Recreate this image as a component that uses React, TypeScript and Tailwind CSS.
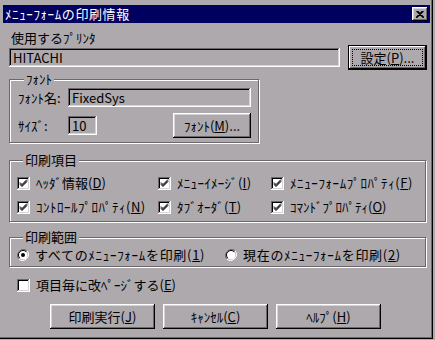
import type { ReactNode } from 'react';

const raised =
  'shadow-[inset_-1px_-1px_0_#000,inset_1px_1px_0_#fff,inset_-2px_-2px_0_#6b676b,inset_2px_2px_0_#d6d3d6]';
const sunken =
  'shadow-[inset_-1px_-1px_0_#fff,inset_1px_1px_0_#6b676b,inset_-2px_-2px_0_#d6d3d6,inset_2px_2px_0_#000]';

const Key = ({ k }: { k: string }) => (
  <>
    (<span className="underline underline-offset-[1px]">{k}</span>)
  </>
);

const Check = ({ on = true }: { on?: boolean }) => (
  <span className={`w-[13px] h-[13px] bg-white shrink-0 flex items-center justify-center ${sunken}`}>
    {on && (
      <svg width="13" height="13" viewBox="0 0 13 13">
        <path d="M3 5.5 L5 7.5 L10 2.5 M3 6.5 L5 8.5 L10 3.5 M3 7.5 L5 9.5 L10 4.5" stroke="#000" strokeWidth="1" fill="none" />
      </svg>
    )}
  </span>
);

const Radio = ({ on }: { on?: boolean }) => (
  <svg width="12" height="12" viewBox="0 0 12 12" className="shrink-0">
    <path d="M10.2 1.8 A6 6 0 0 0 1.8 10.2" stroke="#6b676b" strokeWidth="1" fill="none" />
    <path d="M1.8 10.2 A6 6 0 0 0 10.2 1.8" stroke="#fff" strokeWidth="1" fill="none" />
    <circle cx="6" cy="6" r="4.5" fill="#fff" />
    <path d="M9.2 2.8 A4.5 4.5 0 0 0 2.8 9.2" stroke="#000" strokeWidth="1" fill="none" />
    {on && <circle cx="6" cy="6" r="2" fill="#000" />}
  </svg>
);

const Item = ({ children, on = true, className = '' }: { children: ReactNode; on?: boolean; className?: string }) => (
  <div className="flex items-center h-[16px] gap-[6px] whitespace-nowrap">
    <Check on={on} />
    <span className={className}>{children}</span>
  </div>
);

const Group = ({ title, className, children }: { title: string; className: string; children: ReactNode }) => (
  <fieldset
    className={`border border-[#6b676b] shadow-[1px_1px_0_#fff,inset_1px_1px_0_#fff] min-w-0 ${className}`}
  >
    <legend className="ml-[6px] px-[2px] h-[14px] leading-[14px] bg-[#ada9ad]">{title}</legend>
    {children}
  </fieldset>
);

const Button = ({ children, className = '' }: { children: ReactNode; className?: string }) => (
  <div className={`h-[25px] flex items-center justify-center ${raised} ${className}`}>{children}</div>
);

export default function App() {
  return (
    <div className="w-[435px] h-[340px] bg-[#ada9ad] text-[13px] leading-[14px] text-black font-['Noto_Sans_CJK_JP','Noto_Sans',sans-serif]">
      <div className="w-[433px] h-[339px] pt-[5px] px-[3px] shadow-[inset_-1px_-1px_0_#000,inset_-2px_-2px_0_#6b676b]">
        <div className="h-[18px] bg-[#00005f] flex items-center pl-[2px] pr-[2px]">
          <span className="text-white text-[13px] tracking-[0.6px]">ﾒﾆｭｰﾌｫｰﾑの印刷情報</span>
          <div className={`ml-auto w-[16px] h-[14px] bg-[#ada9ad] flex items-center justify-center ${raised}`}>
            <svg width="8" height="7" viewBox="0 0 8 7">
              <path d="M0.5 0 L7.5 7 M1.5 0 L8 6.5 M7.5 0 L0.5 7 M6.5 0 L0 6.5" stroke="#000" strokeWidth="1.1" />
            </svg>
          </div>
        </div>

        <div className="pl-[6px] pr-[3px]">
          <div className="mt-[8px] h-[14px] pl-[2px]">使用するﾌﾟﾘﾝﾀ</div>
          <div className="flex items-center h-[25px]">
            <div className={`w-[331px] h-[19px] flex items-center pl-[4px] ${sunken}`}>HITACHI</div>
            <div className="ml-[8px] w-[79px] h-[25px] border border-black">
              <div className="h-full p-[3px] shadow-[inset_-1px_-1px_0_#000,inset_1px_1px_0_#fff,inset_-2px_-2px_0_#6b676b]">
                <div className="h-full border border-dotted border-black flex items-center justify-center">
                  設定<Key k="P" />...
                </div>
              </div>
            </div>
          </div>

          <Group title="ﾌｫﾝﾄ" className="mt-[2px] w-[250px] pl-[8px] pr-[7px] pb-[4px]">
            <div className="mt-[2px] flex items-center h-[19px]">
              <span className="w-[50px]">ﾌｫﾝﾄ名:</span>
              <div className={`w-[183px] h-[19px] flex items-center pl-[4px] ${sunken}`}>FixedSys</div>
            </div>
            <div className="mt-[6px] flex items-center h-[25px]">
              <span className="w-[50px]">ｻｲｽﾞ:</span>
              <div className={`w-[29px] h-[19px] flex items-center pl-[4px] ${sunken}`}>10</div>
              <Button className="ml-auto w-[78px]">
                ﾌｫﾝﾄ<Key k="M" />...
              </Button>
            </div>
          </Group>

          <Group title="印刷項目" className="mt-[10px] w-[417px] pl-[7px] pt-[8px] pb-[6px]">
            <div className="grid grid-cols-[141px_113px_1fr] gap-y-[8px]">
              <Item>ﾍｯﾀﾞ情報<Key k="D" /></Item>
              <Item className="tracking-[0.3px]">ﾒﾆｭｰｲﾒｰｼﾞ<Key k="I" /></Item>
              <Item className="tracking-[0.6px]">ﾒﾆｭｰﾌｫｰﾑﾌﾟﾛﾊﾟﾃｨ<Key k="F" /></Item>
              <Item className="tracking-[0.5px]">ｺﾝﾄﾛｰﾙﾌﾟﾛﾊﾟﾃｨ<Key k="N" /></Item>
              <Item className="tracking-[0.3px]">ﾀﾌﾞｵｰﾀﾞ<Key k="T" /></Item>
              <Item>ｺﾏﾝﾄﾞﾌﾟﾛﾊﾟﾃｨ<Key k="O" /></Item>
            </div>
          </Group>

          <Group title="印刷範囲" className="mt-[8px] w-[417px] pl-[7px] pt-[3px] pb-[3px]">
            <div className="flex h-[16px] items-center">
              <div className="w-[208px] flex items-center gap-[6px] whitespace-nowrap">
                <Radio on />
                <span className="tracking-[0.7px]">すべてのﾒﾆｭｰﾌｫｰﾑを印刷<Key k="1" /></span>
              </div>
              <div className="flex items-center gap-[6px] whitespace-nowrap">
                <Radio />
                <span className="tracking-[0.7px]">現在のﾒﾆｭｰﾌｫｰﾑを印刷<Key k="2" /></span>
              </div>
            </div>
          </Group>

          <div className="mt-[10px] ml-[8px]">
            <Item on={false}>項目毎に改ﾍﾟｰｼﾞする<Key k="E" /></Item>
          </div>

          <div className="mt-[11px] ml-[41px] flex gap-[8px]">
            <Button className="w-[105px]">印刷実行<Key k="J" /></Button>
            <Button className="w-[105px]">ｷｬﾝｾﾙ<Key k="C" /></Button>
            <Button className="w-[105px]">ﾍﾙﾌﾟ<Key k="H" /></Button>
          </div>
        </div>
      </div>
    </div>
  );
}
